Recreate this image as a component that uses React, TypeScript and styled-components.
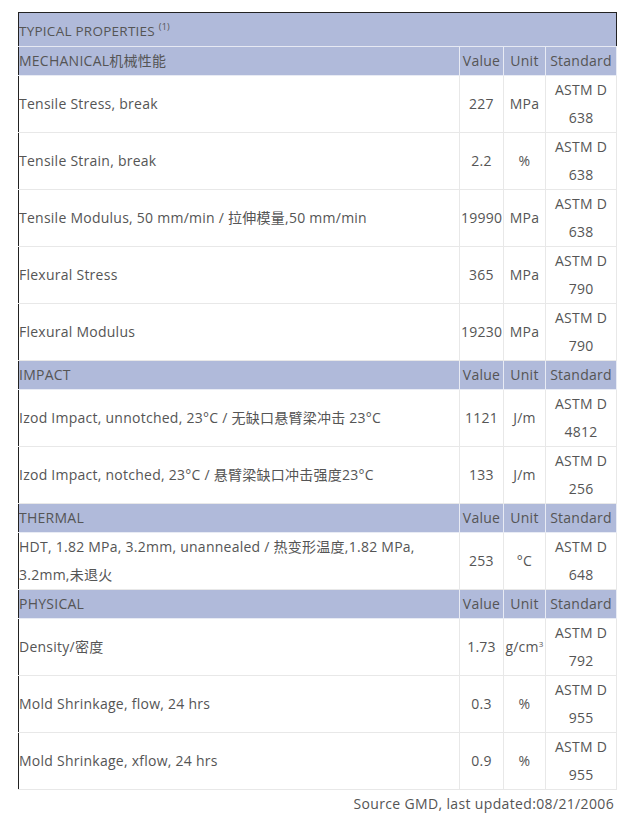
import React from "react";
import styled, { createGlobalStyle } from "styled-components";

const Global = createGlobalStyle`
  html, body { margin: 0; padding: 0; background: #fff; }
  body { font-family: "Open Sans", "Noto Sans CJK SC", sans-serif; color: #555; }
`;

const Wrap = styled.div`
  width: 598px;
  padding: 12px 0 0 18px;
`;

const Table = styled.table`
  width: 598px;
  table-layout: fixed;
  border-collapse: collapse;
  border: 1px solid #222;
  font-size: 14px;
  letter-spacing: 0.25px;
  line-height: 28px;
  color: #555;
`;

const Col = styled.col<{ $w: number }>`
  width: ${(p) => p.$w}px;
`;

const TitleCell = styled.td`
  background: #b0bada;
  padding: 3px 0 0;
  height: 30px;
  border-bottom: 1px solid #e6e9f3;
  text-align: left;
  font-size: 13.5px;
  sup { font-size: 9px; line-height: 0; vertical-align: 6px; }
`;

const HeadRow = styled.tr`
  background: #b0bada;
`;

const HeadCell = styled.td<{ $label?: boolean }>`
  padding: ${(p) => (p.$label ? "0 1px 0 0" : "0 1px")};
  height: 28px;
  text-align: ${(p) => (p.$label ? "left" : "center")};
  border: 1px solid #e8ebf4;
  border-left: ${(p) => (p.$label ? "none" : "1px solid #e8ebf4")};
  white-space: nowrap;
  overflow: visible;
`;

const Cell = styled.td<{ $label?: boolean }>`
  padding: ${(p) => (p.$label ? "0 1px 0 0" : "0 1px")};
  height: 56px;
  text-align: ${(p) => (p.$label ? "left" : "center")};
  vertical-align: middle;
  border: 1px solid #e8e8e8;
  border-left: ${(p) => (p.$label ? "none" : "1px solid #e8e8e8")};
`;

const UnitCell = styled(Cell)`
  white-space: nowrap;
  sup { font-size: 8px; line-height: 0; vertical-align: 5px; }
`;

const Footer = styled.div`
  width: 598px;
  text-align: right;
  font-size: 14px;
  letter-spacing: 0.35px;
  line-height: 28px;
  color: #555;
  padding-right: 2px;
  box-sizing: border-box;
`;

type Row = { label: string; value: string; unit: React.ReactNode; std: string };
type Section = { title: string; rows: Row[] };

const sections: Section[] = [
  {
    title: "MECHANICAL机械性能",
    rows: [
      { label: "Tensile Stress, break", value: "227", unit: "MPa", std: "ASTM D 638" },
      { label: "Tensile Strain, break", value: "2.2", unit: "%", std: "ASTM D 638" },
      { label: "Tensile Modulus, 50 mm/min / 拉伸模量,50 mm/min", value: "19990", unit: "MPa", std: "ASTM D 638" },
      { label: "Flexural Stress", value: "365", unit: "MPa", std: "ASTM D 790" },
      { label: "Flexural Modulus", value: "19230", unit: "MPa", std: "ASTM D 790" },
    ],
  },
  {
    title: "IMPACT",
    rows: [
      { label: "Izod Impact, unnotched, 23°C / 无缺口悬臂梁冲击 23°C", value: "1121", unit: "J/m", std: "ASTM D 4812" },
      { label: "Izod Impact, notched, 23°C / 悬臂梁缺口冲击强度23°C", value: "133", unit: "J/m", std: "ASTM D 256" },
    ],
  },
  {
    title: "THERMAL",
    rows: [
      { label: "HDT, 1.82 MPa, 3.2mm, unannealed / 热变形温度,1.82 MPa, 3.2mm,未退火", value: "253", unit: "°C", std: "ASTM D 648" },
    ],
  },
  {
    title: "PHYSICAL",
    rows: [
      { label: "Density/密度", value: "1.73", unit: <>g/cm<sup>3</sup></>, std: "ASTM D 792" },
      { label: "Mold Shrinkage, flow, 24 hrs", value: "0.3", unit: "%", std: "ASTM D 955" },
      { label: "Mold Shrinkage, xflow, 24 hrs", value: "0.9", unit: "%", std: "ASTM D 955" },
    ],
  },
];

export default function App() {
  return (
    <Wrap>
      <Global />
      <Table>
        <colgroup>
          <Col $w={441} />
          <Col $w={44} />
          <Col $w={42} />
          <Col $w={71} />
        </colgroup>
        <tbody>
          <tr>
            <TitleCell colSpan={4}>
              TYPICAL PROPERTIES <sup>(1)</sup>
            </TitleCell>
          </tr>
          {sections.map((s) => (
            <React.Fragment key={s.title}>
              <HeadRow>
                <HeadCell $label>{s.title}</HeadCell>
                <HeadCell>Value</HeadCell>
                <HeadCell>Unit</HeadCell>
                <HeadCell>Standard</HeadCell>
              </HeadRow>
              {s.rows.map((r) => (
                <tr key={r.label}>
                  <Cell $label>{r.label}</Cell>
                  <Cell>{r.value}</Cell>
                  <UnitCell>{r.unit}</UnitCell>
                  <Cell>{r.std}</Cell>
                </tr>
              ))}
            </React.Fragment>
          ))}
        </tbody>
      </Table>
      <Footer>Source GMD, last updated:08/21/2006</Footer>
    </Wrap>
  );
}
